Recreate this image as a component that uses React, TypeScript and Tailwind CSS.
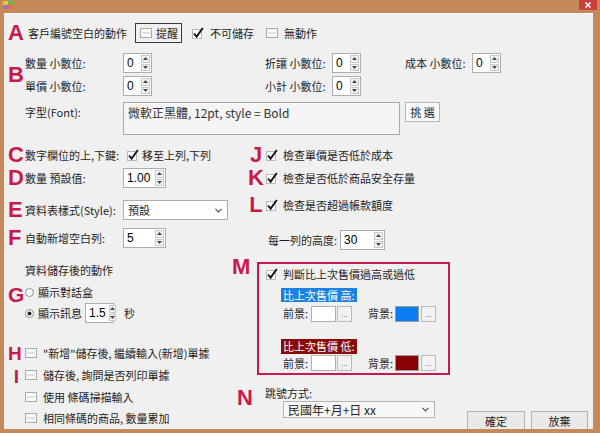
import React from 'react';

// annotation letter (red capitals in the margin)
function Letter({ c, className = '' }: { c: string; className?: string }) {
  return (
    <span
      className={`font-['Liberation_Sans',Arial,sans-serif] font-bold leading-none text-[#c8194d] ${className}`}
    >
      {c}
    </span>
  );
}

function Checked() {
  return (
    <svg width="13" height="13" viewBox="0 0 13 13" className="shrink-0">
      <rect x="0.5" y="2.5" width="9" height="9" fill="#fff" stroke="#b8b8b8" />
      <path d="M2 6.5 L4.6 9.6 L10.8 1" fill="none" stroke="#111" strokeWidth="1.9" />
    </svg>
  );
}

function Unchecked() {
  return (
    <svg width="12" height="10" viewBox="0 0 12 10" className="shrink-0">
      <rect x="0.5" y="0.5" width="11" height="9" fill="#fafafa" stroke="#a9a9a9" />
      <line x1="2" y1="5" x2="10" y2="5" stroke="#c6c6c6" />
    </svg>
  );
}

function Radio({ on }: { on?: boolean }) {
  return (
    <svg width="9" height="9" viewBox="0 0 9 9" className="shrink-0">
      <circle cx="4.5" cy="4.5" r="4" fill="#fff" stroke="#8a8a8a" />
      {on && <circle cx="4.5" cy="4.5" r="2" fill="#222" />}
    </svg>
  );
}

function Spin({ value, className = '', right }: { value: string; className?: string; right?: boolean }) {
  return (
    <div className={`flex h-[20px] shrink-0 border border-[#abadb3] bg-white ${className}`}>
      <span
        className={`flex-1 px-[3px] font-['Liberation_Sans',Arial,sans-serif] text-[12px] leading-[18px] text-black ${right ? 'text-right' : ''}`}
      >
        {value}
      </span>
      <div className="my-[1px] mr-[1px] flex w-[9px] flex-col gap-[1px]">
        <div className="flex flex-1 items-center justify-center border border-[#c9c9c9] bg-[#f3f3f3]">
          <svg width="5" height="3" viewBox="0 0 5 3">
            <path d="M0 3 L2.5 0 L5 3Z" fill="#444" />
          </svg>
        </div>
        <div className="flex flex-1 items-center justify-center border border-[#c9c9c9] bg-[#f3f3f3]">
          <svg width="5" height="3" viewBox="0 0 5 3">
            <path d="M0 0 L2.5 3 L5 0Z" fill="#444" />
          </svg>
        </div>
      </div>
    </div>
  );
}

function Chevron() {
  return (
    <svg width="7" height="5" viewBox="0 0 7 5" className="shrink-0">
      <path d="M0.5 0.8 L3.5 3.8 L6.5 0.8" fill="none" stroke="#555" strokeWidth="1.2" />
    </svg>
  );
}

function DotsButton() {
  return (
    <div className="flex h-[16px] w-[15px] items-end justify-center border border-[#b9b9b9] bg-[#f2f2f2] pb-[2px] font-['Liberation_Sans',Arial,sans-serif] text-[8px] leading-none text-[#555]">
      ...
    </div>
  );
}

function ColorRow({ bg }: { bg: string }) {
  return (
    <div className="flex h-[16px] items-center pl-[24px]">
      <span className="w-[28px]">前景:</span>
      <div className="h-[16px] w-[25px] border border-[#b0b0b0] bg-white" />
      <div className="ml-[1px]">
        <DotsButton />
      </div>
      <span className="ml-[16px] w-[27px]">背景:</span>
      <div className={`h-[16px] w-[24px] border border-[#9a9a9a] ${bg}`} />
      <div className="ml-[2px]">
        <DotsButton />
      </div>
    </div>
  );
}

export default function App() {
  return (
    <div className="flex h-[433px] w-[600px] flex-col overflow-hidden bg-[#c68a5a] font-['Noto_Sans_CJK_TC','Liberation_Sans',sans-serif] text-[11px] text-[#1e1e1e]">
      {/* title bar */}
      <div className="flex h-[13px] shrink-0 items-start justify-between">
        <svg width="10" height="10" viewBox="0 0 10 10" className="ml-[3px]">
          <rect x="0" y="1" width="5" height="4" fill="#e9c640" />
          <rect x="5" y="1" width="5" height="4" fill="#6cb84a" />
          <rect x="0" y="5" width="5" height="4" fill="#a66fc4" />
          <rect x="5" y="5" width="5" height="4" fill="#e26a5a" />
        </svg>
        <div className="mr-[3px] flex h-[10px] w-[18px] items-center justify-center bg-[#c9423d]">
          <svg width="6" height="6" viewBox="0 0 6 6">
            <path d="M0.5 0.5 L5.5 5.5 M5.5 0.5 L0.5 5.5" stroke="#fff" strokeWidth="1.5" />
          </svg>
        </div>
      </div>

      {/* dialog body */}
      <div className="ml-[4px] flex h-[416px] w-[589px] flex-col overflow-hidden border-t border-white bg-[#f0f0f0] pl-[4px]">
        {/* A */}
        <div className="mt-[9px] flex h-[20px] items-center">
          <Letter c="A" className="w-[20px] text-[22px]" />
          <span className="w-[107px]">客戶編號空白的動作</span>
          <div className="flex h-[20px] w-[47px] items-center gap-[4px] border border-[#3a3a3a] bg-[#f0f0f0] pl-[4px]">
            <Unchecked />
            <span>提醒</span>
          </div>
          <div className="ml-[10px] flex items-center gap-[5px]">
            <Checked />
            <span>不可儲存</span>
          </div>
          <div className="ml-[12px] flex items-center gap-[6px]">
            <Unchecked />
            <span>無動作</span>
          </div>
        </div>

        {/* B */}
        <div className="mt-[10px] flex items-center">
          <Letter c="B" className="w-[17px] text-[22px]" />
          <div className="flex flex-col gap-[3px]">
            <div className="flex h-[20px] items-center">
              <span className="w-[98px]">數量 小數位:</span>
              <Spin value="0" className="w-[29px]" />
              <span className="ml-[113px] w-[67px]">折讓 小數位:</span>
              <Spin value="0" className="w-[29px]" />
              <span className="ml-[44px] w-[67px]">成本 小數位:</span>
              <Spin value="0" className="w-[29px]" />
            </div>
            <div className="flex h-[20px] items-center">
              <span className="w-[98px]">單價 小數位:</span>
              <Spin value="0" className="w-[29px]" />
              <span className="ml-[113px] w-[67px]">小計 小數位:</span>
              <Spin value="0" className="w-[29px]" />
            </div>
          </div>
        </div>

        {/* font */}
        <div className="mt-[6px] flex items-start pl-[17px]">
          <span className="w-[98px] pt-[2px]">字型(Font):</span>
          <div className="h-[33px] w-[277px] border border-[#a8a8a8] bg-[#f5f5f5] px-[4px] pt-[1px] text-[12px] text-[#333]">
            微軟正黑體, 12pt, style = Bold
          </div>
          <div className="ml-[5px] flex h-[20px] w-[35px] items-center justify-center border border-[#b5b5b5] bg-[#fafafa]">
            挑 選
          </div>
        </div>

        {/* two columns */}
        <div className="flex flex-1">
          {/* left column */}
          <div className="flex w-[224px] flex-col">
            <div className="mt-[10px] flex h-[20px] items-center">
              <Letter c="C" className="w-[17px] text-[22px]" />
              <span className="w-[102px]">數字欄位的上,下鍵:</span>
              <Checked />
              <span className="ml-[2px]">移至上列,下列</span>
            </div>
            <div className="mt-[3px] flex h-[20px] items-center">
              <Letter c="D" className="w-[17px] text-[22px]" />
              <span className="w-[98px]">數量 預設值:</span>
              <Spin value="1.00" className="w-[43px]" />
            </div>
            <div className="mt-[12px] flex h-[20px] items-center">
              <Letter c="E" className="w-[17px] text-[22px]" />
              <span className="w-[98px]">資料表樣式(Style):</span>
              <div className="flex h-[20px] w-[105px] items-center justify-between border border-[#abadb3] bg-white pl-[4px] pr-[5px]">
                <span>預設</span>
                <Chevron />
              </div>
            </div>
            <div className="mt-[8px] flex h-[20px] items-center">
              <Letter c="F" className="w-[17px] text-[22px]" />
              <span className="w-[98px]">自動新增空白列:</span>
              <Spin value="5" className="w-[43px]" />
            </div>
            <div className="mt-[14px] flex h-[16px] items-center pl-[17px]">資料儲存後的動作</div>
            <div className="mt-[6px] flex h-[16px] items-center">
              <Letter c="G" className="h-[16px] w-[17px] text-[21px] leading-[16px]" />
              <Radio />
              <span className="ml-[4px]">顯示對話盒</span>
            </div>
            <div className="mt-[3px] flex h-[20px] items-center pl-[17px]">
              <Radio on />
              <span className="ml-[4px] w-[47px]">顯示訊息</span>
              <Spin value="1.5" className="w-[29px]" right />
              <span className="ml-[10px]">秒</span>
            </div>
            <div className="mt-[22px] flex h-[16px] items-center">
              <Letter c="H" className="-mt-[2px] h-[16px] w-[17px] text-[19px] leading-[16px]" />
              <Unchecked />
              <span className="ml-[6px]">"新增"儲存後, 繼續輸入(新增)單據</span>
            </div>
            <div className="mt-[6px] flex h-[16px] items-center">
              <Letter c="I" className="h-[16px] w-[17px] text-center text-[19px] leading-[16px]" />
              <Unchecked />
              <span className="ml-[6px]">儲存後, 詢問是否列印單據</span>
            </div>
            <div className="mt-[6px] flex h-[16px] items-center pl-[17px]">
              <Unchecked />
              <span className="ml-[6px]">使用 條碼掃描輸入</span>
            </div>
            <div className="mt-[5px] flex h-[16px] items-center pl-[17px]">
              <Unchecked />
              <span className="ml-[6px]">相同條碼的商品, 數量累加</span>
            </div>
          </div>

          {/* right column */}
          <div className="flex flex-1 flex-col">
            <div className="mt-[10px] flex h-[20px] items-center pl-[14px]">
              <Letter c="J" className="w-[20px] text-center text-[22px]" />
              <Checked />
              <span className="ml-[4px]">檢查單價是否低於成本</span>
            </div>
            <div className="mt-[3px] flex h-[20px] items-center pl-[14px]">
              <Letter c="K" className="w-[20px] text-center text-[22px]" />
              <Checked />
              <span className="ml-[4px]">檢查是否低於商品安全存量</span>
            </div>
            <div className="mt-[7px] flex h-[20px] items-center pl-[14px]">
              <Letter c="L" className="w-[20px] text-center text-[22px]" />
              <Checked />
              <span className="ml-[4px]">檢查是否超過帳款額度</span>
            </div>
            <div className="mt-[15px] flex h-[20px] items-center pl-[36px]">
              <span className="w-[72px]">每一列的高度:</span>
              <Spin value="30" className="w-[45px]" />
            </div>

            {/* M */}
            <div className="mt-[12px] flex items-start">
              <Letter c="M" className="-mt-[6px] w-[25px] text-[22px]" />
              <div className="flex h-[113px] w-[193px] flex-col border-2 border-[#c8194d] pt-[2px]">
                <div className="flex h-[16px] items-center pl-[7px]">
                  <Checked />
                  <span className="ml-[4px]">判斷比上次售價過高或過低</span>
                </div>
                <div className="mt-[5px] pl-[22px]">
                  <span className="inline-block h-[14px] bg-[#1a82e2] px-[2px] leading-[14px] text-white">
                    比上次售價 高:
                  </span>
                </div>
                <div className="mt-[2px]">
                  <ColorRow bg="bg-[#0b7cf2]" />
                </div>
                <div className="mt-[16px] pl-[22px]">
                  <span className="inline-block h-[15px] bg-[#8b0a0a] px-[2px] leading-[15px] text-white">
                    比上次售價 低:
                  </span>
                </div>
                <div className="mt-[1px]">
                  <ColorRow bg="bg-[#8b0000]" />
                </div>
              </div>
            </div>

            {/* N + buttons */}
            <div className="mt-[10px] flex flex-1 items-start">
              <Letter c="N" className="w-[33px] pl-[5px] pt-[2px] text-[22px]" />
              <div className="flex flex-col">
                <span className="h-[16px] leading-[16px]">跳號方式:</span>
                <div className="ml-[18px] flex h-[17px] w-[152px] items-center justify-between border border-[#b5b5b5] bg-[#f7f7f7] pl-[4px] pr-[5px]">
                  <span className="text-[12px] leading-none">民國年+月+日 xx</span>
                  <Chevron />
                </div>
              </div>
              <div className="ml-auto mr-[5px] mt-[26px] flex gap-[6px]">
                <div className="flex h-[20px] w-[58px] items-center justify-center border border-[#b3b3b3] bg-[#e9e9e9]">
                  確定
                </div>
                <div className="flex h-[20px] w-[57px] items-center justify-center border border-[#b3b3b3] bg-[#e9e9e9]">
                  放棄
                </div>
              </div>
            </div>
          </div>
        </div>
      </div>
    </div>
  );
}
